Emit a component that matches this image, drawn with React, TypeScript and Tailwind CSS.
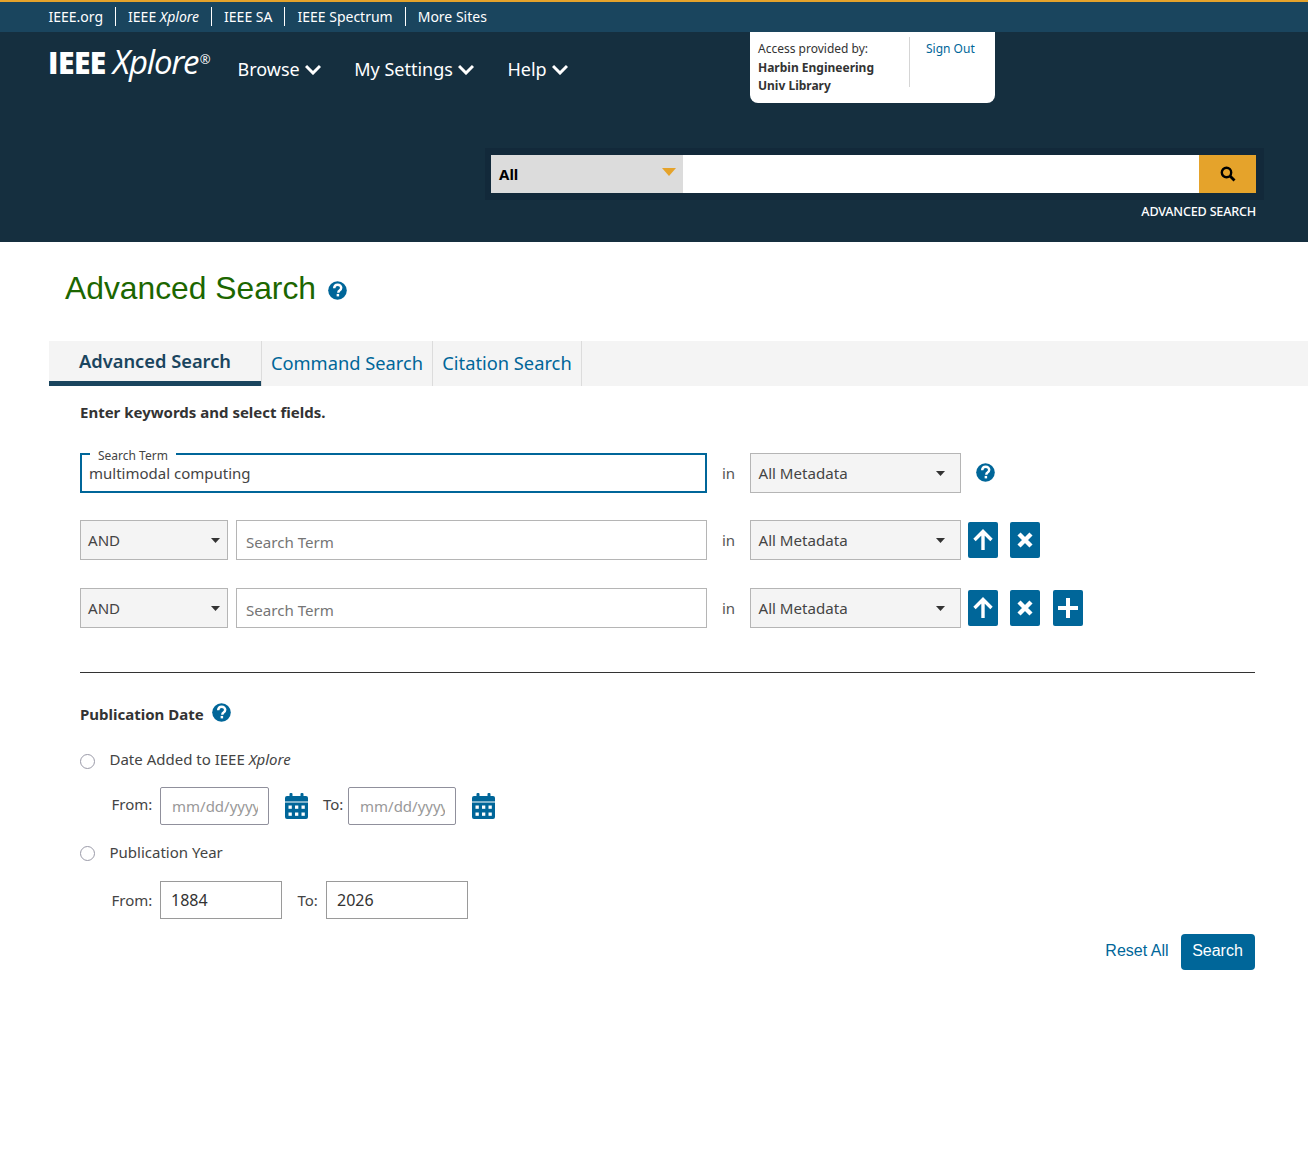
import React from "react";

const Q = ({ size = 20 }: { size?: number }) => (
  <svg width={size} height={size} viewBox="0 0 20 20" className="shrink-0">
    <circle cx="10" cy="10" r="9.800" fill="#006699" />
    <path d="M6.500 7.700C6.600 5.400 8.100 4 10.200 4c2.200 0 3.700 1.300 3.700 3.200 0 1.400-.8 2.200-1.800 2.900-.9.600-1.200 1-1.200 1.900v.3" fill="none" stroke="#fff" strokeWidth="2.600" />
    <rect x="9.100" y="13.600" width="2.600" height="2.600" fill="#fff" />
  </svg>
);

const Chevron = () => (
  <svg width="16" height="11" viewBox="0 0 16 11" className="shrink-0">
    <path d="M1 2l7 7 7-7" fill="none" stroke="#fff" strokeWidth="3" />
  </svg>
);

const Caret = () => (
  <svg width="9" height="5" viewBox="0 0 9 5" className="shrink-0">
    <path d="M0 0h9L4.500 5z" fill="#333" />
  </svg>
);

const Calendar = () => (
  <svg width="23" height="26" viewBox="0 0 23 26" className="shrink-0">
    <rect x="0" y="3" width="23" height="23" rx="2" fill="#006699" />
    <rect x="4.500" y="0" width="3" height="6" rx="1" fill="#006699" />
    <rect x="15.500" y="0" width="3" height="6" rx="1" fill="#006699" />
    <rect x="0" y="8.500" width="23" height="1" fill="#fff" />
    {[3.500, 10, 16.500].map((x) => (
      <React.Fragment key={x}>
        <rect x={x} y="12.500" width="3.300" height="3.300" fill="#fff" />
        <rect x={x} y="19.500" width="3.300" height="3.300" fill="#fff" />
      </React.Fragment>
    ))}
  </svg>
);

const IconBtn = ({ kind }: { kind: "up" | "x" | "plus" }) => (
  <button className="w-[30px] h-[36px] bg-[#006699] rounded-[2px] flex items-center justify-center shrink-0">
    <svg width="24" height="24" viewBox="0 0 24 24">
      {kind === "up" && <path d="M12 22V4M3.500 12L12 3.500l8.500 8.500" fill="none" stroke="#fff" strokeWidth="3.400" />}
      {kind === "x" && <path d="M6 6l12 12M18 6L6 18" fill="none" stroke="#fff" strokeWidth="4.400" />}
      {kind === "plus" && <path d="M12 2v20M2 12h20" fill="none" stroke="#fff" strokeWidth="4" />}
    </svg>
  </button>
);

const MetaSelect = () => (
  <div className="w-[211px] h-[40px] border border-[#b5b5b5] bg-[#f4f4f4] flex items-center justify-between pl-[7.500px] pr-[15px] text-[15.100px] text-[#444] shrink-0">
    <span>All Metadata</span>
    <Caret />
  </div>
);

const AndSelect = () => (
  <div className="w-[148px] h-[40px] border border-[#b5b5b5] bg-[#f4f4f4] flex items-center justify-between pl-[7px] pr-[7px] text-[15.100px] text-[#444] shrink-0">
    <span>AND</span>
    <Caret />
  </div>
);

const TermInput = () => (
  <div className="w-[471px] h-[40px] border border-[#b5b5b5] bg-white flex items-center pl-[9px] pt-[4px] text-[15.100px] text-[#757575] shrink-0 ml-[8px]">
    Search Term
  </div>
);

const In = () => <span className="w-[43px] text-center text-[15px] text-[#555] shrink-0">in</span>;

const Radio = () => <span className="w-[15px] h-[15px] rounded-full border border-[#9a9aa8] bg-white shrink-0" />;

const TopLink = ({ children, last }: { children: React.ReactNode; last?: boolean }) => (
  <span className={last ? "pl-[12px]" : "pl-[12px] pr-[12px] border-r border-white leading-[19px]"}>{children}</span>
);

const DateBox = ({ w }: { w: string }) => (
  <div className={`${w} h-[38px] border border-[#90909c] rounded-[2px] pl-[11px] flex items-center text-[#999] shrink-0`}>
    <span className="whitespace-nowrap">mm/dd/yyyy</span>
  </div>
);

export default function App() {
  return (
    <div className="min-h-[1161px] bg-white text-[#333]" style={{ fontFamily: '"Noto Sans", sans-serif' }}>
      <div className="h-[32px] bg-[#1a455e] border-t-2 border-[#e5a32b] flex items-center pl-[36.500px] pb-[2px] text-[14px] text-white">
        <TopLink>IEEE.org</TopLink>
        <TopLink>
          IEEE <i>Xplore</i>
        </TopLink>
        <TopLink>IEEE SA</TopLink>
        <TopLink>IEEE Spectrum</TopLink>
        <TopLink last>More Sites</TopLink>
      </div>

      <header className="h-[210px] bg-[#152f3f] flex flex-col">
        <div className="flex items-start pl-[49px] h-[71px]">
          <div className="w-[188.500px] text-white flex items-baseline mt-[10px] h-[40px] leading-[40px] shrink-0" style={{ fontFamily: '"Open Sans", sans-serif' }}>
            <span className="text-[30px] font-extrabold -ml-[1px] tracking-[-0.500px]">IEEE</span>
            <i className="text-[33px] ml-[7px] font-normal tracking-[-1.200px]">Xplore</i>
            <span className="text-[13px] relative -top-[10px] ml-[1.500px]">®</span>
          </div>
          <nav className="flex items-center text-[18px] text-white h-[76px] w-[512.500px] shrink-0 pb-[1px]">
            <span className="flex items-center gap-[5px]">Browse <Chevron /></span>
            <span className="flex items-center gap-[5px] ml-[33.500px]">My Settings <Chevron /></span>
            <span className="flex items-center gap-[5px] ml-[33.500px]">Help <Chevron /></span>
          </nav>
          <div className="w-[245px] h-[71px] bg-white rounded-b-[8px] flex pt-[5px] shrink-0">
            <div className="w-[160px] h-[50px] border-r border-[#d5d5d5] pl-[8px] text-[12px] leading-[18.500px] text-[#333] pt-[3px]">
              <div>Access provided by:</div>
              <div className="font-bold">Harbin Engineering</div>
              <div className="font-bold">Univ Library</div>
            </div>
            <span className="pl-[16px] pt-[3px] text-[12px] leading-[18.500px] text-[#006699]">Sign Out</span>
          </div>
        </div>
        <div className="flex justify-end pr-[44px] mt-[45px]">
          <div className="w-[779px] h-[52px] bg-[#12293a] pl-[6px] pt-[7px] pr-[8px] flex items-start">
            <div className="w-[192px] h-[38px] bg-[#dcdcdc] flex items-start justify-between pl-[8px] pr-[7px] shrink-0">
              <span className="text-[15px] font-bold text-black mt-[9px] leading-[20px]">All</span>
              <svg width="14" height="8" viewBox="0 0 14 8" className="mt-[13px]"><path d="M0 0h14L7 8z" fill="#e5a32b" /></svg>
            </div>
            <div className="flex-1 h-[38px] bg-white" />
            <div className="w-[57px] h-[38px] bg-[#e5a32b] flex items-center justify-center shrink-0">
              <svg width="16" height="16" viewBox="0 0 16 16">
                <circle cx="6.500" cy="6.500" r="4.700" fill="none" stroke="#000" strokeWidth="2.400" />
                <path d="M10 10l4.500 4.500" stroke="#000" strokeWidth="2.800" />
              </svg>
            </div>
          </div>
        </div>
        <div className="flex justify-end pr-[52px] mt-[4px] text-[12.600px] leading-[16px] text-white font-medium tracking-[-0.2px]">ADVANCED SEARCH</div>
      </header>

      <h1 className="pl-[65px] mt-[28px] h-[37px] flex items-center gap-[12px] text-[#1c6600] text-[31.800px] leading-[37px]" style={{ fontFamily: '"Liberation Sans", sans-serif' }}>
        Advanced Search <span className="mt-[3px]"><Q size={19} /></span>
      </h1>

      <div className="ml-[49px] mt-[34px] h-[45px] bg-[#f4f4f4] flex">
        <div className="w-[212px] border-b-[5px] border-[#1a455e] text-[18.300px] font-semibold text-[#1a455e] text-center leading-[39px]">Advanced Search</div>
        <div className="w-[171px] border-l border-[#dcdcdc] text-[18.300px] text-[#006699] text-center leading-[43px]">Command Search</div>
        <div className="w-[150px] border-x border-[#dcdcdc] text-[18.300px] text-[#006699] text-center leading-[43px]">Citation Search</div>
      </div>

      <main className="pl-[80px] pr-[53px]">
        <p className="mt-[16px] text-[15px] font-bold text-[#333] leading-[20px]">Enter keywords and select fields.</p>

        <div className="mt-[31px] flex items-center">
          <div className="relative w-[627px] h-[40px] border-2 border-[#006699] pl-[7px] pt-[6px] text-[15px] leading-[24px] text-[#444] shrink-0">
            <span className="absolute left-[8px] -top-[6px] px-[8px] bg-white text-[12px] leading-[14px] text-[#444]">Search Term</span>
            multimodal computing
          </div>
          <In />
          <MetaSelect />
          <span className="ml-[15px] mb-[2px]"><Q size={19} /></span>
        </div>

        <div className="mt-[27px] flex items-center">
          <AndSelect />
          <TermInput />
          <In />
          <MetaSelect />
          <div className="ml-[7px] flex gap-[12px]">
            <IconBtn kind="up" />
            <IconBtn kind="x" />
          </div>
        </div>

        <div className="mt-[28px] flex items-center">
          <AndSelect />
          <TermInput />
          <In />
          <MetaSelect />
          <div className="ml-[7px] flex">
            <IconBtn kind="up" />
            <span className="ml-[12px]"><IconBtn kind="x" /></span>
            <span className="ml-[13px]"><IconBtn kind="plus" /></span>
          </div>
        </div>

        <hr className="mt-[44px] border-t border-[#333]" />

        <div className="mt-[30px] flex items-center gap-[8px] h-[20px]">
          <span className="text-[15px] font-bold text-[#333] mt-[2px]">Publication Date</span>
          <span className="-mt-[2px]"><Q size={19} /></span>
        </div>

        <div className="mt-[28px] h-[20px] flex items-center text-[15px] text-[#444]">
          <Radio />
          <span className="ml-[14.500px] -mt-[3px]">Date Added to IEEE <i>Xplore</i></span>
        </div>

        <div className="mt-[16px] ml-[31.500px] flex items-center h-[38px] text-[15px] text-[#444]">
          <span className="w-[48.500px] -mt-[3px]">From:</span>
          <div className="w-[109px] h-[38px] border border-[#90909c] rounded-[2px] pl-[11px] pr-[10px] flex items-center text-[#999] shrink-0">
            <input readOnly placeholder="mm/dd/yyyy" className="w-full bg-transparent outline-none placeholder:text-[#999]" />
          </div>
          <span className="ml-[16px]"><Calendar /></span>
          <span className="ml-[15px] w-[25px] -mt-[3px]">To:</span>
          <div className="w-[108px] h-[38px] border border-[#90909c] rounded-[2px] pl-[11px] pr-[10px] flex items-center text-[#999] shrink-0">
            <input readOnly placeholder="mm/dd/yyyy" className="w-full bg-transparent outline-none placeholder:text-[#999]" />
          </div>
          <span className="ml-[16px]"><Calendar /></span>
        </div>

        <div className="mt-[18px] h-[20px] flex items-center text-[15px] text-[#444]">
          <Radio />
          <span className="ml-[14.500px] -mt-[2px]">Publication Year</span>
        </div>

        <div className="mt-[18px] ml-[31.500px] flex items-center h-[38px] text-[15px] text-[#444]">
          <span className="w-[48.500px]">From:</span>
          <div className="w-[122px] h-[38px] border border-[#9a9a9a] pl-[10px] flex items-center text-[16px] text-[#333]">1884</div>
          <span className="ml-[15.500px] w-[28.500px]">To:</span>
          <div className="w-[142px] h-[38px] border border-[#9a9a9a] pl-[10px] flex items-center text-[16px] text-[#333]">2026</div>
        </div>

        <div className="mt-[15px] flex justify-end items-center" style={{ fontFamily: '"Liberation Sans", sans-serif' }}>
          <span className="text-[16px] text-[#006699] mr-[12.500px] -mt-[2px]">Reset All</span>
          <button className="w-[74px] h-[36px] bg-[#006699] rounded-[4px] text-white text-[16px] pb-[3px] pr-[1px]">Search</button>
        </div>
      </main>
    </div>
  );
}
